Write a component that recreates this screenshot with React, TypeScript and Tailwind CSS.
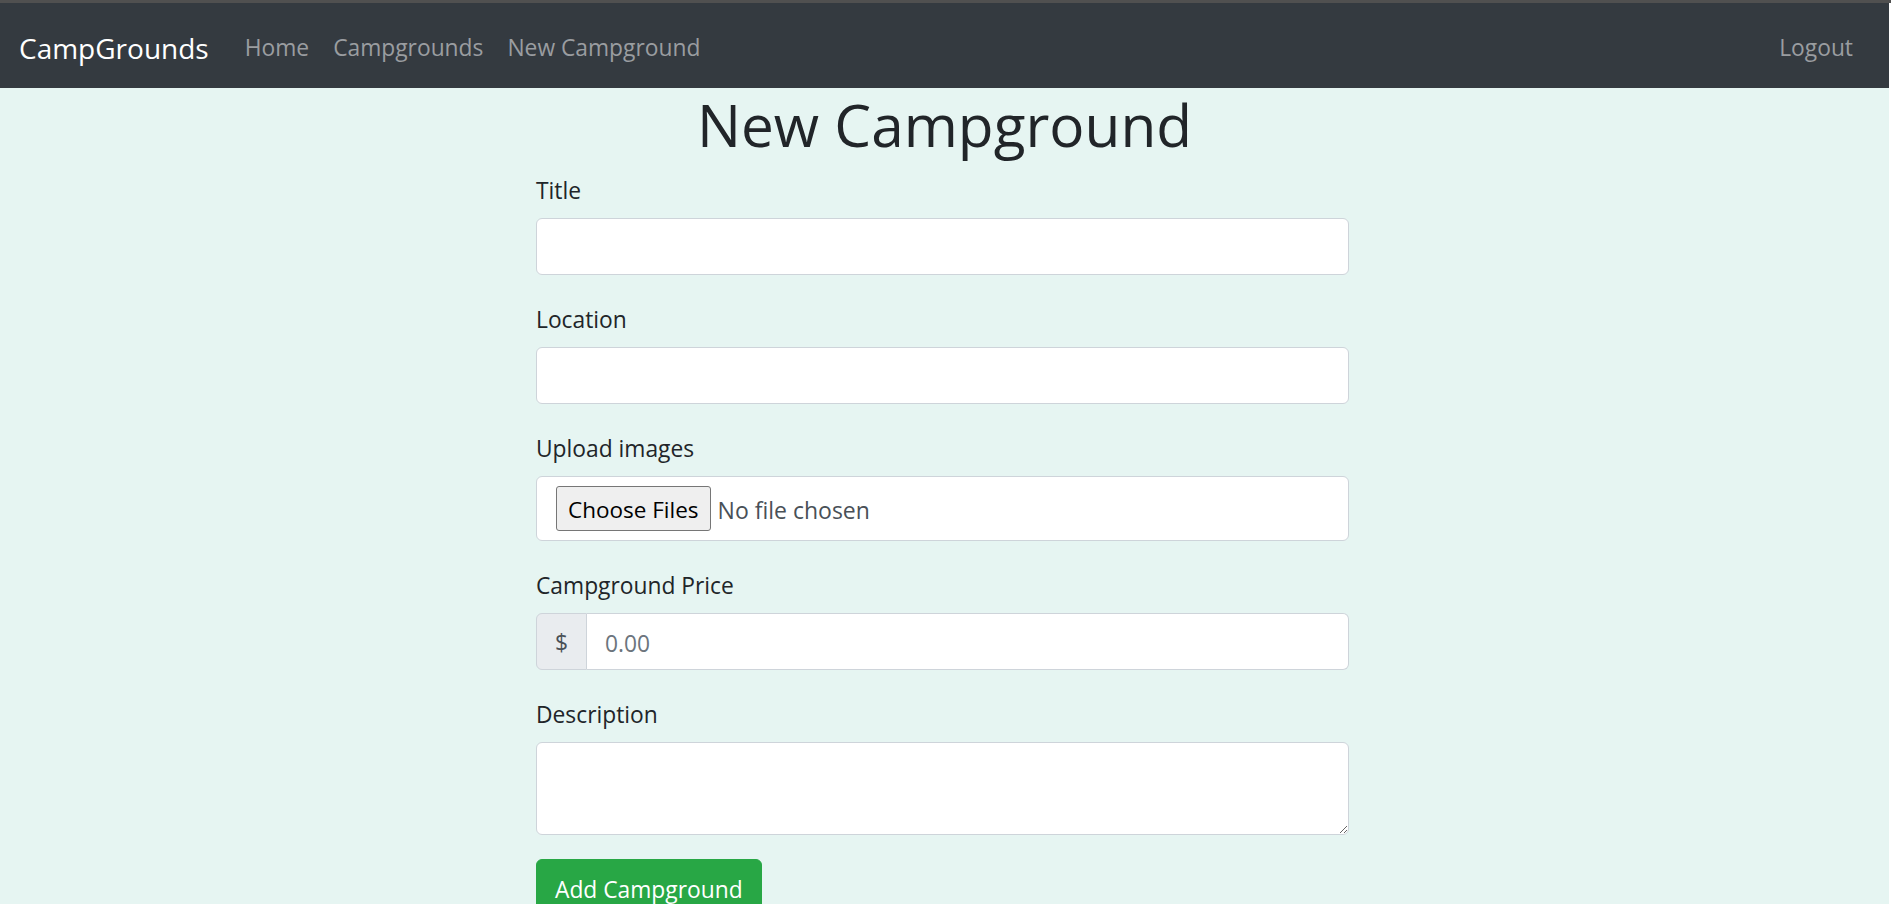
import { useState } from "react";

const font = { fontFamily: '"Open Sans", "Noto Sans", sans-serif' };

function Field({
  label,
  children,
}: {
  label: string;
  children: React.ReactNode;
}) {
  return (
    <div className="mb-[24px]">
      <label className="mb-[9px] block pt-[3px] text-[22.8px] leading-[36px] text-[#212529]">
        {label}
      </label>
      {children}
    </div>
  );
}

export default function App() {
  const [title, setTitle] = useState("");
  const [location, setLocation] = useState("");
  const [price, setPrice] = useState("");
  const [description, setDescription] = useState("");

  const inputClass =
    "block h-[57px] w-full rounded-[6px] border border-[#ced4da] bg-white px-[18px] pt-[4px] text-[22.8px] text-[#495057] outline-none";

  return (
    <div className="min-h-screen bg-white" style={font}>
      <div className="h-[3px] w-full bg-[#505050]" />
      <div className="w-[1889px] min-h-[901px] bg-[#e6f5f2]">
        <nav className="flex h-[85px] items-center bg-[#343a40] pl-[19px] pr-[24px] pt-[5px]">
          <a className="mr-[24px] text-[28px] leading-[45px] text-white">
            CampGrounds
          </a>
          <div className="flex text-[22.8px] leading-[36px] text-[#9a9da0]">
            <a className="px-[12px]">Home</a>
            <a className="px-[12px]">Campgrounds</a>
            <a className="px-[12px]">New Campground</a>
          </div>
          <div className="ml-auto text-[22.8px] leading-[36px] text-[#9a9da0]">
            <a className="px-[12px]">Logout</a>
          </div>
        </nav>

        <h1 className="mb-[10px] text-center text-[58.5px] font-medium leading-[72px] text-[#212529]">
          New Campground
        </h1>

        <form className="ml-[536px] w-[813px]">
          <Field label="Title">
            <input
              className={inputClass}
              value={title}
              onChange={(e) => setTitle(e.target.value)}
            />
          </Field>
          <Field label="Location">
            <input
              className={inputClass}
              value={location}
              onChange={(e) => setLocation(e.target.value)}
            />
          </Field>
          <Field label="Upload images">
            <div className="flex h-[65px] items-center rounded-[6px] border border-[#ced4da] bg-white pl-[19px]">
              <button
                type="button"
                className="h-[45px] rounded-[3px] border border-[#767676] bg-[#efefef] px-[11px] pt-[3px] text-[22.5px] text-black"
              >
                Choose Files
              </button>
              <span className="ml-[7px] mt-[4px] text-[23px] text-[#495057]">
                No file chosen
              </span>
            </div>
          </Field>
          <Field label="Campground Price">
            <div className="flex h-[57px]">
              <span className="flex w-[51px] items-center justify-center rounded-l-[6px] border border-[#ced4da] bg-[#e9ecef] pt-[4px] text-[22.8px] text-[#495057]">
                $
              </span>
              <input
                className="h-full flex-1 rounded-r-[6px] border border-l-0 border-[#ced4da] bg-white px-[18px] pt-[4px] text-[22.8px] text-[#495057] outline-none placeholder:text-[#6c757d]"
                placeholder="0.00"
                value={price}
                onChange={(e) => setPrice(e.target.value)}
              />
            </div>
          </Field>
          <Field label="Description">
            <textarea
              className="block h-[93px] w-full rounded-[6px] border border-[#ced4da] bg-white px-[18px] py-[9px] text-[22.8px] text-[#495057] outline-none"
              value={description}
              onChange={(e) => setDescription(e.target.value)}
            />
          </Field>
          <button
            type="button"
            className="h-[57px] rounded-[6px] border border-[#28a745] bg-[#28a745] px-[18px] pt-[4px] text-[22.8px] leading-[36px] text-white"
          >
            Add Campground
          </button>
        </form>
      </div>
    </div>
  );
}
